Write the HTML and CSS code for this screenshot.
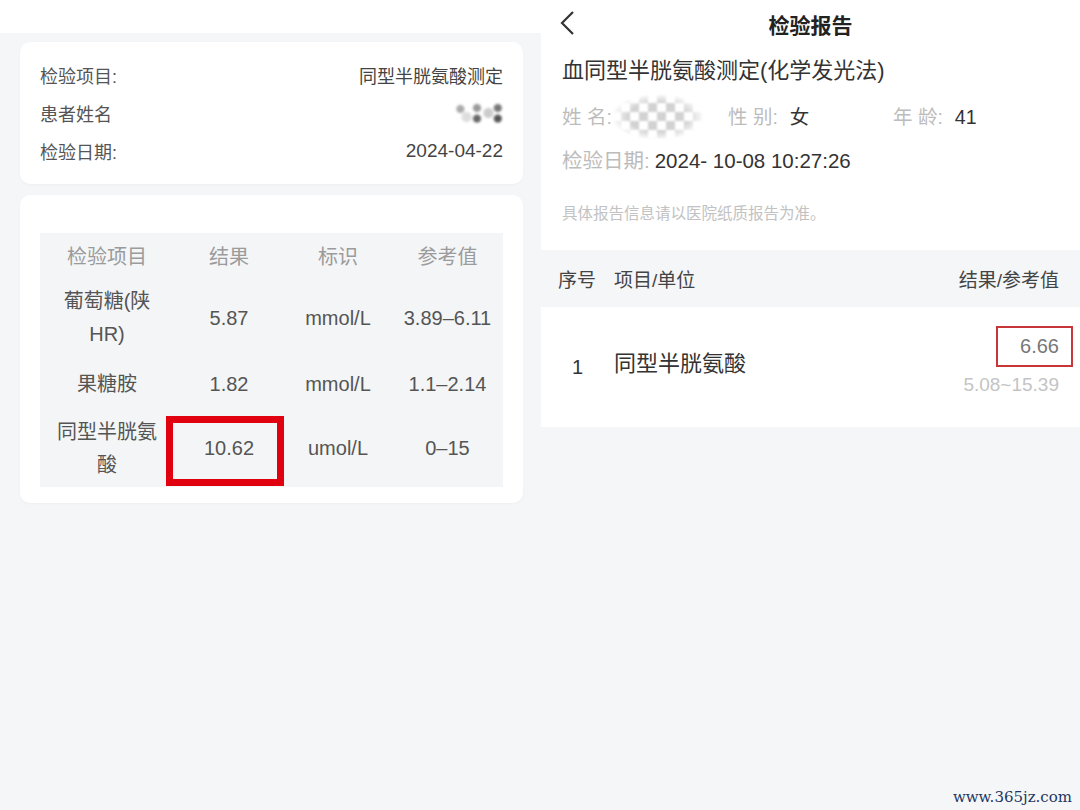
FILE: index.html
```html
<!DOCTYPE html>
<html lang="zh-CN">
<head>
  <meta charset="UTF-8">
  <meta name="viewport" content="width=device-width, initial-scale=1.0">
  <title>检验报告对比</title>
  <link rel="stylesheet" href="styles.css">
</head>
<body>

  <div class="page">

    <!-- left screenshot -->
    <div class="left">
      <div class="left-top"></div>

      <div class="card info-card">
        <div class="info-row">
          <span>检验项目:</span>
          <span class="info-value">同型半胱氨酸测定</span>
        </div>
        <div class="info-row">
          <span>患者姓名</span>
          <span class="blur-small"></span>
        </div>
        <div class="info-row">
          <span>检验日期:</span>
          <span class="info-value info-date">2024-04-22</span>
        </div>
      </div>

      <div class="card table-card">
        <div class="lab-table">
          <div class="th">检验项目</div>
          <div class="th">结果</div>
          <div class="th">标识</div>
          <div class="th">参考值</div>

          <div class="td name">葡萄糖(陕HR)</div>
          <div class="td">5.87</div>
          <div class="td">mmol/L</div>
          <div class="td">3.89–6.11</div>

          <div class="td name">果糖胺</div>
          <div class="td">1.82</div>
          <div class="td">mmol/L</div>
          <div class="td">1.1–2.14</div>

          <div class="td name">同型半胱氨酸</div>
          <div class="td marked">10.62<span class="mark-box"></span></div>
          <div class="td">umol/L</div>
          <div class="td">0–15</div>
        </div>
      </div>
    </div>

    <!-- right screenshot -->
    <div class="right">
      <div class="report-head">
        <div class="nav">
          <svg class="back" width="16" height="26" viewBox="0 0 16 26">
            <polyline points="14,2 3,13 14,24" fill="none" stroke="#333" stroke-width="2.2"/>
          </svg>
          <span class="nav-title">检验报告</span>
        </div>
        <div class="report-title">血同型半胱氨酸测定(化学发光法)</div>
        <div class="meta-row">
          <div><span class="meta-label">姓 名:</span><span class="blur-big"></span></div>
          <div><span class="meta-label">性 别:</span>女</div>
          <div><span class="meta-label">年 龄:</span>41</div>
        </div>
        <div class="date-row"><span class="meta-label">检验日期:</span>2024- 10-08 10:27:26</div>
        <div class="notice">具体报告信息请以医院纸质报告为准。</div>
      </div>

      <div class="result-head">
        <span class="col-no">序号</span>
        <span class="col-item">项目/单位</span>
        <span class="col-value">结果/参考值</span>
      </div>

      <div class="result-row">
        <span class="col-no">1</span>
        <span class="col-item item-name">同型半胱氨酸</span>
        <div class="col-value value-stack">
          <span class="value-box">6.66</span>
          <span class="ref-range">5.08~15.39</span>
        </div>
      </div>
    </div>

    <div class="watermark">www.365jz.com</div>
  </div>

</body>
</html>
```

FILE: styles.css
```css
body {
  margin: 0;
  padding: 0;
  font-family: "Liberation Sans", "Noto Sans CJK SC", sans-serif;
  background-color: #f5f6f8;
}

.page {
  position: relative;
  display: flex;
  width: 1080px;
  height: 810px;
  overflow: hidden;
}

/* left side */
.left {
  width: 541px;
  background-color: #f5f6f8;
}

.left-top {
  height: 33px;
  background-color: #fff;
}

.card {
  margin: 9px 18px 0 20px;
  background-color: #fff;
  border-radius: 10px;
  box-shadow: 0 1px 3px rgba(0, 0, 0, 0.03);
}

.info-card {
  padding: 14px 20px;
}

.info-row {
  display: flex;
  justify-content: space-between;
  align-items: center;
  height: 38px;
  font-size: 18px;
  color: #555;
}

.info-value {
  color: #444;
}

.info-date {
  font-size: 19px;
}

.blur-small {
  width: 52px;
  height: 20px;
  background:
    radial-gradient(circle at 18% 30%, #aaa 0 3px, transparent 5px),
    radial-gradient(circle at 50% 25%, #999 0 3px, transparent 5px),
    radial-gradient(circle at 50% 78%, #666 0 3px, transparent 5px),
    radial-gradient(circle at 90% 25%, #777 0 3px, transparent 5px),
    radial-gradient(circle at 90% 78%, #555 0 3px, transparent 5px),
    radial-gradient(circle at 72% 50%, #ccc 0 4px, transparent 6px),
    radial-gradient(circle at 30% 70%, #ddd 0 4px, transparent 6px);
  filter: blur(0.8px);
}

.table-card {
  margin-top: 11px;
  padding: 38px 20px 16px;
}

.lab-table {
  display: grid;
  grid-template-columns: 134px 110px 108px 111px;
  grid-template-rows: 45px 80px 52px 77px;
  background-color: #f4f5f7;
  font-size: 20px;
  color: #555;
}

.th,
.td {
  display: flex;
  align-items: center;
  justify-content: center;
  text-align: center;
}

.th {
  color: #9b9b9b;
}

.td {
  line-height: 33px;
}

.name {
  padding: 0 14px;
}

.marked {
  position: relative;
}

.mark-box {
  position: absolute;
  left: -8px;
  right: 0;
  top: 6px;
  bottom: 1px;
  border: 7px solid #e1000f;
}

/* right side */
.right {
  width: 539px;
  background-color: #f5f6f8;
}

.report-head {
  height: 250px;
  background-color: #fff;
  padding-left: 21px;
  box-sizing: border-box;
}

.nav {
  position: relative;
  height: 48px;
  display: flex;
  align-items: center;
  justify-content: center;
}

.back {
  position: absolute;
  left: -3px;
  top: 10px;
}

.nav-title {
  margin-right: 21px;
  font-size: 21px;
  font-weight: bold;
  color: #222;
}

.report-title {
  line-height: 46px;
  font-size: 22px;
  color: #333;
}

.meta-row {
  display: grid;
  grid-template-columns: 166px 165px 1fr;
  line-height: 42px;
  font-size: 19.5px;
  color: #333;
}

.meta-row > div {
  display: flex;
  align-items: center;
}

.meta-label {
  color: #bcbcbc;
  margin-right: 12px;
}

.blur-big {
  width: 92px;
  height: 46px;
  margin-left: -12px;
  background-color: #fff;
  background-image: repeating-conic-gradient(#d2d2d2 0 25%, #fff 0 50%);
  background-size: 18px 18px;
  -webkit-mask-image: radial-gradient(ellipse at center, #000 45%, transparent 72%);
  mask-image: radial-gradient(ellipse at center, #000 45%, transparent 72%);
  filter: blur(1px);
}

.date-row {
  line-height: 42px;
  font-size: 20.5px;
  color: #333;
}

.date-row .meta-label {
  margin-right: 5px;
}

.notice {
  margin-top: 22px;
  line-height: 20px;
  font-size: 15.5px;
  color: #c2c2c2;
}

.result-head,
.result-row {
  display: flex;
  align-items: center;
  padding: 0 21px 0 17px;
}

.result-head {
  height: 57px;
  font-size: 19px;
  color: #444;
}

.col-no {
  width: 56px;
}

.col-item {
  flex: 1;
}

.col-value {
  text-align: right;
}

.result-row {
  height: 120px;
  background-color: #fff;
}

.result-row .col-no {
  padding-left: 14px;
  width: 42px;
  font-size: 20px;
  color: #333;
}

.item-name {
  padding-bottom: 12px;
  font-size: 22px;
  color: #333;
}

.value-stack {
  display: flex;
  flex-direction: column;
  align-items: flex-end;
  padding-bottom: 10px;
}

.value-box {
  margin-right: -14px;
  padding: 0 12px 0 22px;
  height: 37px;
  line-height: 37px;
  border: 2px solid #c9363a;
  font-size: 20px;
  color: #777;
}

.ref-range {
  margin-top: 5px;
  line-height: 26px;
  font-size: 19px;
  color: #c4c4c4;
}

.watermark {
  position: absolute;
  right: 8px;
  bottom: 4px;
  font-family: "DejaVu Serif", serif;
  font-size: 15px;
  color: #1e3663;
}
```
